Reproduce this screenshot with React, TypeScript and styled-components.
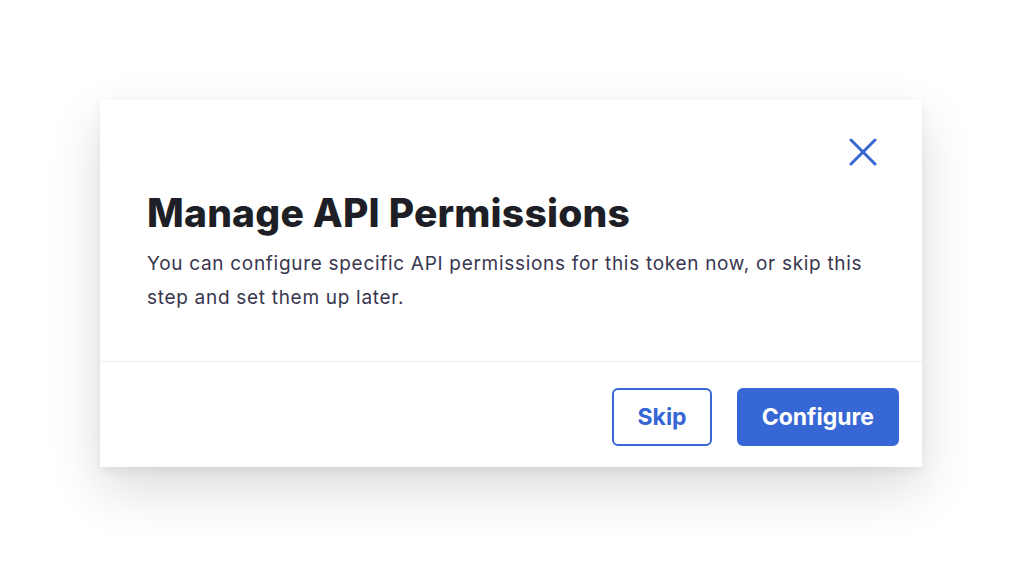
import React from "react";
import styled, { createGlobalStyle } from "styled-components";

const GlobalStyle = createGlobalStyle`
    html, body {
        margin: 0;
        padding: 0;
        background: #ffffff;
        font-family: Inter, "Noto Sans", sans-serif;
    }
`;

const Page = styled.div`
    width: 1022px;
    height: 568px;
    display: flex;
    justify-content: center;
    padding-top: 100px;
    box-sizing: border-box;
`;

const Modal = styled.div`
    width: 822px;
    height: 367px;
    background: #ffffff;
    box-shadow: 0 22px 50px rgba(0, 0, 0, 0.14), 0 4px 10px rgba(0, 0, 0, 0.06);
    display: flex;
    flex-direction: column;
`;

const Body = styled.div`
    padding: 36px 40px 0 47px;
    height: 262px;
    box-sizing: border-box;
    border-bottom: 1px solid #eeedf2;
    display: flex;
    flex-direction: column;
`;

const CloseRow = styled.div`
    display: flex;
    justify-content: flex-end;
`;

const CloseButton = styled.button`
    background: transparent;
    border: none;
    padding: 0;
    margin-right: 3px;
    width: 32px;
    height: 32px;
    display: flex;
    align-items: center;
    justify-content: center;
    cursor: pointer;
`;

const Title = styled.h1`
    margin: 21px 0 0;
    font-size: 39px;
    font-weight: 800;
    letter-spacing: 0.2px;
    color: #1e1f26;
    line-height: 48px;
`;

const Text = styled.p`
    margin: 10px 0 0;
    font-size: 19px;
    line-height: 34px;
    letter-spacing: 0.7px;
    color: #39364f;
`;

const Footer = styled.div`
    flex: 1;
    display: flex;
    justify-content: flex-end;
    align-items: flex-end;
    gap: 25px;
    padding: 0 23px 21px 0;
`;

const Button = styled.button<{ $primary?: boolean }>`
    height: 58px;
    padding: 0 23px;
    border-radius: 6px;
    font-family: Inter, "Noto Sans", sans-serif;
    font-size: 23px;
    font-weight: 700;
    cursor: pointer;
    box-sizing: border-box;
    border: 2px solid #3766d5;
    background: ${(p) => (p.$primary ? "#3766d5" : "#ffffff")};
    color: ${(p) => (p.$primary ? "#ffffff" : "#3766d5")};
`;

export default function App() {
    return (
        <>
            <GlobalStyle />
            <Page>
                <Modal>
                    <Body>
                        <CloseRow>
                            <CloseButton aria-label="Close">
                                <svg width="28" height="28" viewBox="0 0 28 28">
                                    <path d="M2 2 L26 26 M26 2 L2 26" stroke="#3766d5" strokeWidth="3" strokeLinecap="round" />
                                </svg>
                            </CloseButton>
                        </CloseRow>
                        <Title>Manage API Permissions</Title>
                        <Text>
                            You can configure specific API permissions for this token now, or skip this step and set them up later.
                        </Text>
                    </Body>
                    <Footer>
                        <Button>Skip</Button>
                        <Button $primary>Configure</Button>
                    </Footer>
                </Modal>
            </Page>
        </>
    );
}
